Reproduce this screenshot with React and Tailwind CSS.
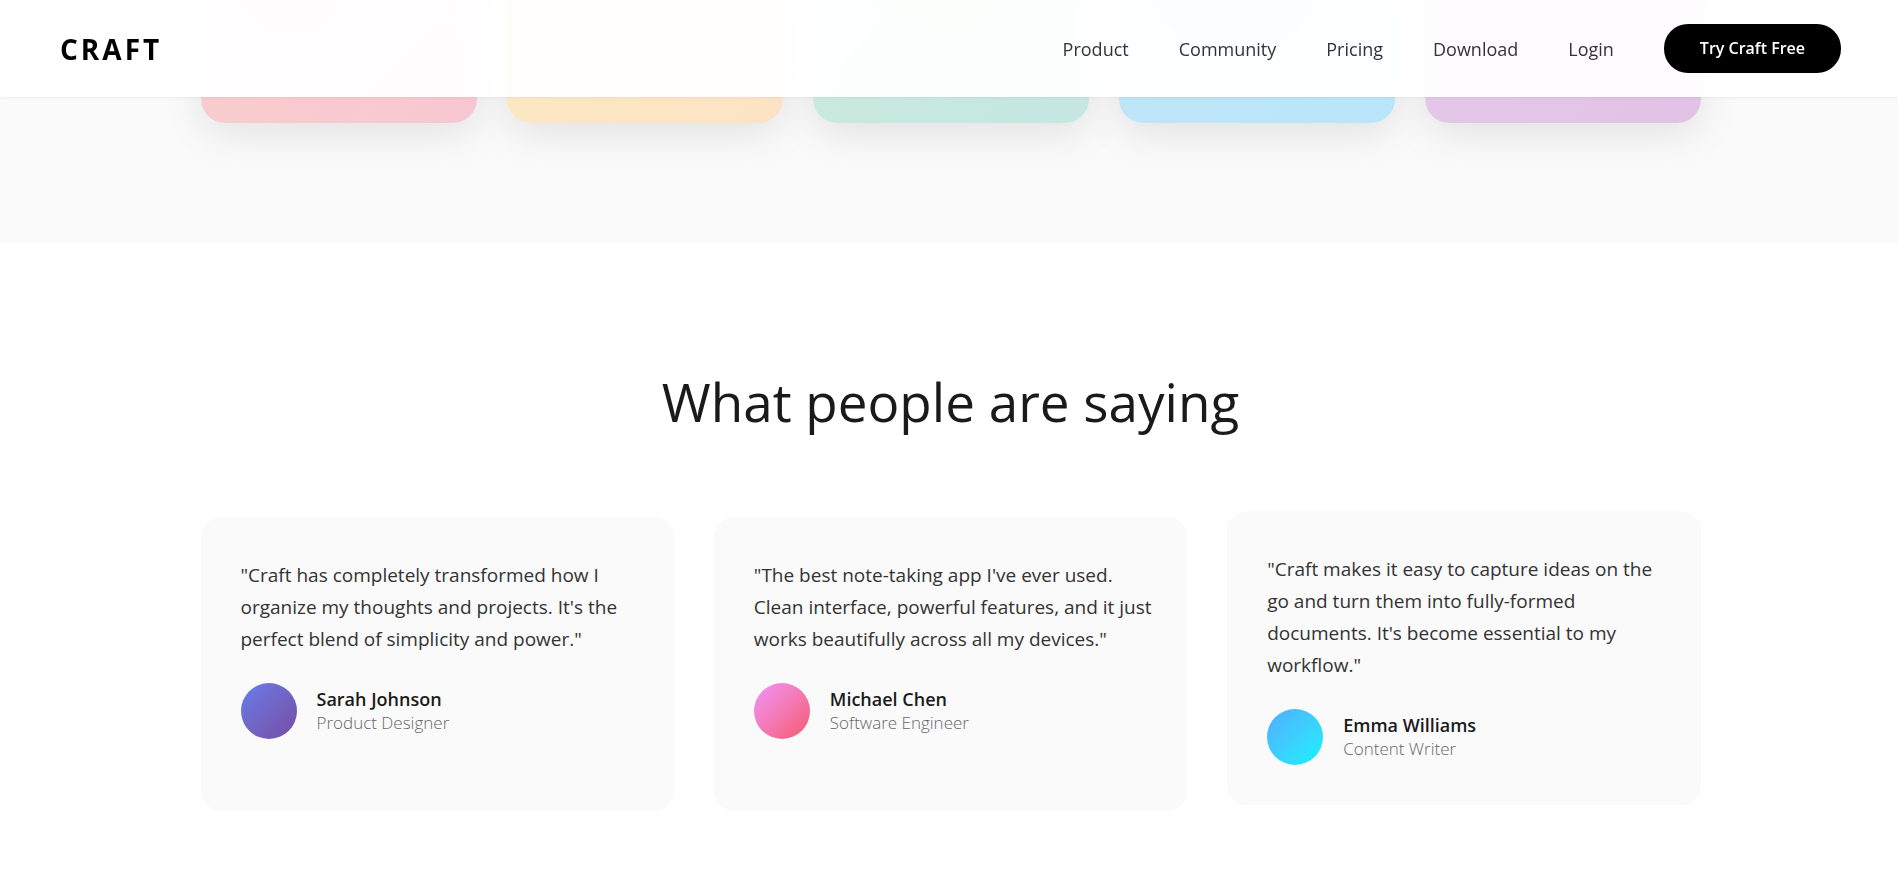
const links = ["Product", "Community", "Pricing", "Download", "Login"];

const features = [
  { id: "rose", card: "from-[#fbd3c8] to-[#f7c7d2]", blob: "h-28 w-28 left-8 bottom-[100px] bg-[#f8bbd0]" },
  { id: "amber", card: "from-[#faf0be] to-[#fce2c4]", blob: "h-28 w-28 left-24 bottom-[108px] bg-[#ffe0b2]" },
  { id: "mint", card: "from-[#cfeed8] to-[#c5e6e2]", blob: "h-32 w-32 left-[74px] bottom-[79px] bg-[#b9e6c4]" },
  { id: "sky", card: "from-[#c4e6f4] to-[#b9e5fa]", blob: "h-44 w-44 left-[26px] bottom-[75px] bg-[#a5e2f2]" },
  { id: "violet", card: "from-[#e6ceea] to-[#e2c2e6]", blob: "h-32 w-32 left-[82px] bottom-[94px] bg-[#debbe4]" },
];

const testimonials = [
  {
    name: "Sarah Johnson",
    role: "Product Designer",
    avatar: "from-[#667eea] to-[#764ba2]",
    lift: "",
    quote:
      "\"Craft has completely transformed how I organize my thoughts and projects. It's the perfect blend of simplicity and power.\"",
  },
  {
    name: "Michael Chen",
    role: "Software Engineer",
    avatar: "from-[#f093fb] to-[#f5576c]",
    lift: "",
    quote:
      "\"The best note-taking app I've ever used. Clean interface, powerful features, and it just works beautifully across all my devices.\"",
  },
  {
    name: "Emma Williams",
    role: "Content Writer",
    avatar: "from-[#4facfe] to-[#00f2fe]",
    lift: "-translate-y-1.5",
    quote:
      "\"Craft makes it easy to capture ideas on the go and turn them into fully-formed documents. It's become essential to my workflow.\"",
  },
];

function Header() {
  return (
    <header className="fixed top-0 left-0 -right-[3px] z-10 flex items-center justify-between bg-white/95 px-[60px] py-6 shadow-[0_1px_3px_rgba(0,0,0,0.05)] backdrop-blur-[10px]">
      <a href="#" className="text-[28px] leading-9 font-bold tracking-[3px] text-black">
        CRAFT
      </a>
      <nav className="flex items-center gap-[50px]">
        {links.map((label) => (
          <a key={label} href="#" className="text-lg leading-6 font-medium text-[#333]">
            {label}
          </a>
        ))}
        <button className="rounded-3xl bg-black px-9 py-3.5 text-base leading-[21px] font-semibold text-white">
          Try Craft Free
        </button>
      </nav>
    </header>
  );
}

function Features() {
  return (
    <section className="-mt-[277px] bg-[#fafafa] pb-[120px]">
      <div className="mx-auto grid max-w-[1500px] grid-cols-5 gap-[30px]">
        {features.map((f) => (
          <div
            key={f.id}
            className={`relative h-[400px] overflow-hidden rounded-3xl bg-linear-135 shadow-[0_10px_40px_rgba(0,0,0,0.1)] ${f.card}`}
          >
            <div className={`absolute rounded-full ${f.blob}`} />
          </div>
        ))}
      </div>
    </section>
  );
}

function Testimonials() {
  return (
    <section className="bg-white pt-[122px] pb-[120px]">
      <h2 className="mb-[78px] text-center text-[53px] leading-[74px] font-normal text-[#1a1a1a]">
        What people are saying
      </h2>
      <div className="mx-auto grid max-w-[1500px] grid-cols-3 gap-10">
        {testimonials.map((t) => (
          <figure key={t.name} className={`rounded-[20px] bg-[#fafafa] pt-[42px] pr-8 pb-10 pl-10 ${t.lift}`}>
            <blockquote className="mb-7 text-[19px] leading-8 text-[#333]">{t.quote}</blockquote>
            <figcaption className="flex items-center gap-5">
              <div className={`h-14 w-14 rounded-full bg-linear-135 ${t.avatar}`} />
              <div>
                <div className="text-lg leading-6 font-semibold text-[#1a1a1a]">{t.name}</div>
                <div className="text-[17px] leading-6 font-light text-[#666]">{t.role}</div>
              </div>
            </figcaption>
          </figure>
        ))}
      </div>
    </section>
  );
}

export default function App() {
  return (
    <div className="overflow-x-clip bg-white font-['Open_Sans','Noto_Sans',sans-serif]">
      <Header />
      <main className="-mr-[3px] flex flex-col">
        <Features />
        <Testimonials />
      </main>
    </div>
  );
}
